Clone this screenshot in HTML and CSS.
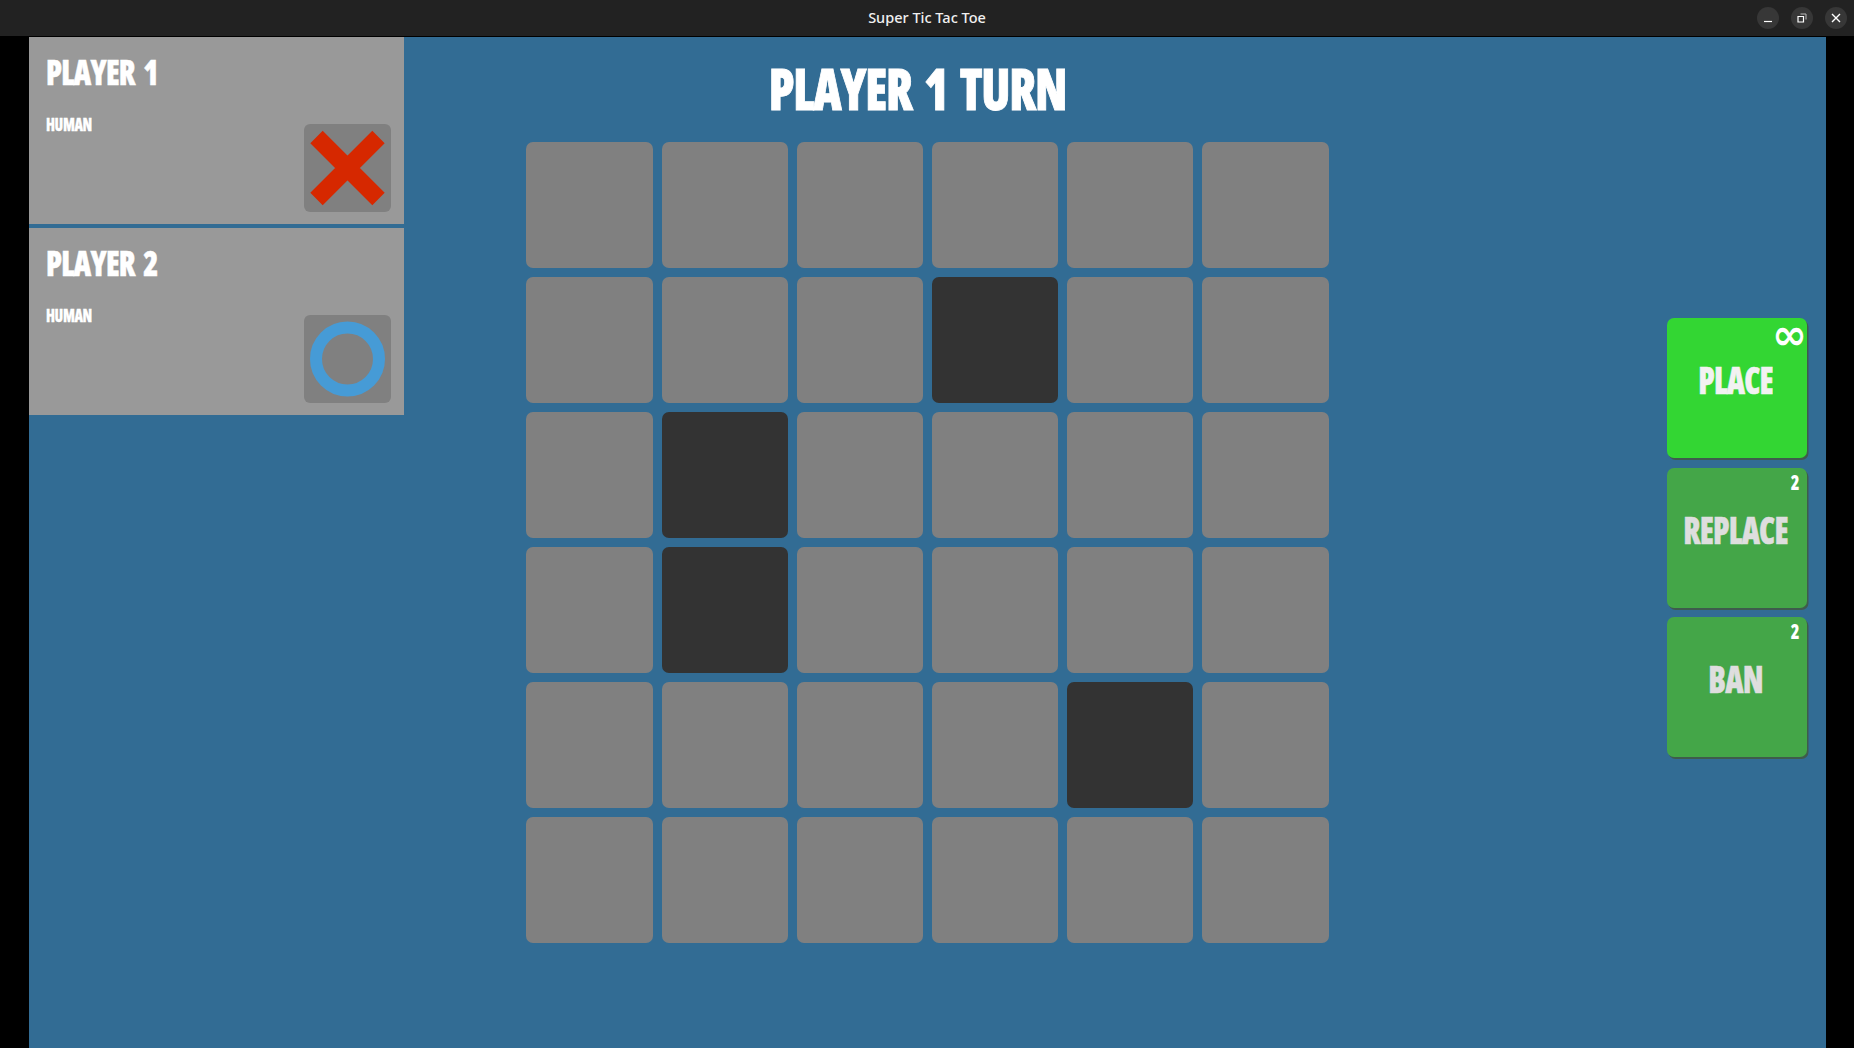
FILE: index.html
```html
<!DOCTYPE html>
<html lang="en">
<head>
<meta charset="utf-8">
<title>Super Tic Tac Toe</title>
<link rel="stylesheet" href="styles.css">
</head>
<body>
<header class="titlebar">
  <span class="window-title">Super Tic Tac Toe</span>
  <div class="window-controls">
    <button class="win-btn" aria-label="Minimize"><svg viewBox="0 0 10 10" width="10" height="10"><path d="M1 8.5h8" stroke="#fff" stroke-width="1.2" fill="none"/></svg></button>
    <button class="win-btn" aria-label="Restore"><svg viewBox="0 0 10 10" width="10" height="10"><path d="M1 3.5h5.5v5.500h-5.500z" stroke="#fff" stroke-width="1.200" fill="none"/><path d="M3.500 1h5.500v5.500" stroke="#bbb" stroke-width="1" fill="none"/></svg></button>
    <button class="win-btn" aria-label="Close"><svg viewBox="0 0 10 10" width="10" height="10"><path d="M1 1l8 8M9 1l-8 8" stroke="#fff" stroke-width="1.400" fill="none"/></svg></button>
  </div>
</header>
<main class="stage">
  <div class="game">
    <aside class="players">
      <section class="player">
        <div class="player-text">
          <h2 class="player-name">PLAYER 1</h2>
          <p class="player-kind">HUMAN</p>
        </div>
        <div class="mark"><svg viewBox="0 0 87 88" width="87" height="88"><path d="M12.500 13L74.500 75M74.500 13L12.500 75" stroke="#d62800" stroke-width="17.500" fill="none"/></svg></div>
      </section>
      <section class="player">
        <div class="player-text">
          <h2 class="player-name">PLAYER 2</h2>
          <p class="player-kind">HUMAN</p>
        </div>
        <div class="mark"><svg viewBox="0 0 87 88" width="87" height="88"><circle cx="43.500" cy="44" r="31.500" stroke="#469bd6" stroke-width="12" fill="none"/></svg></div>
      </section>
    </aside>
    <section class="center">
      <h1 class="turn">PLAYER 1 TURN</h1>
      <div class="board">
        <div class="cell"></div><div class="cell"></div><div class="cell"></div><div class="cell"></div><div class="cell"></div><div class="cell"></div>
        <div class="cell"></div><div class="cell"></div><div class="cell"></div><div class="cell dark"></div><div class="cell"></div><div class="cell"></div>
        <div class="cell"></div><div class="cell dark"></div><div class="cell"></div><div class="cell"></div><div class="cell"></div><div class="cell"></div>
        <div class="cell"></div><div class="cell dark"></div><div class="cell"></div><div class="cell"></div><div class="cell"></div><div class="cell"></div>
        <div class="cell"></div><div class="cell"></div><div class="cell"></div><div class="cell"></div><div class="cell dark"></div><div class="cell"></div>
        <div class="cell"></div><div class="cell"></div><div class="cell"></div><div class="cell"></div><div class="cell"></div><div class="cell"></div>
      </div>
    </section>
    <nav class="actions">
      <button class="action active"><span class="count infinity">∞</span><span class="action-label">PLACE</span></button>
      <button class="action"><span class="count">2</span><span class="action-label">REPLACE</span></button>
      <button class="action"><span class="count">2</span><span class="action-label">BAN</span></button>
    </nav>
  </div>
</main>
</body>
</html>
```
FILE: styles.css
```css
* { box-sizing: border-box; }
html, body { margin: 0; height: 100%; }
body {
  display: flex;
  flex-direction: column;
  background: #000;
  overflow: hidden;
  font-family: "Open Sans", sans-serif;
  font-stretch: 75%;
  font-weight: 800;
}
.titlebar {
  position: relative;
  flex: none;
  height: 37px;
  background: #222;
  border-bottom: 1px solid #000;
  display: flex;
  align-items: center;
  justify-content: center;
}
.window-title {
  position: relative;
  top: -1px;
  font-family: "Noto Sans", sans-serif;
  font-stretch: 100%;
  font-size: 14.500px;
  font-weight: 500;
  color: #f0f0f0;
}
.window-controls {
  position: absolute;
  right: 7px;
  top: 7px;
  display: flex;
  gap: 12px;
}
.win-btn {
  width: 22px;
  height: 22px;
  padding: 0;
  border: 0;
  border-radius: 50%;
  background: #373737;
  display: flex;
  align-items: center;
  justify-content: center;
}
.stage {
  flex: 1;
  min-height: 0;
  padding: 0 28px 0 29px;
}
.game {
  height: 100%;
  background: #326c94;
  display: flex;
}
.players {
  flex: none;
  width: 375px;
  display: flex;
  flex-direction: column;
  gap: 4px;
}
.player {
  height: 187px;
  background: #999;
  padding: 0 13px 12px 17px;
  display: flex;
  justify-content: space-between;
  align-items: flex-end;
  align-self: stretch;
}
.player-text {
  align-self: flex-start;
  color: #fff;
}
.player-name {
  margin: 15px 0 0;
  font-size: 35px;
  line-height: 40px;
  font-weight: 800;
  letter-spacing: -0.026em;
  word-spacing: 4.500px;
  transform: scaleX(0.88);
  transform-origin: left center;
  -webkit-text-stroke: 0.5px #fff;
}
.player-kind {
  margin: 22px 0 0;
  font-size: 18px;
  line-height: 20px;
  font-weight: 800;
  letter-spacing: -0.026em;
  transform: scaleX(0.82);
  transform-origin: left center;
  -webkit-text-stroke: 0.3px #fff;
}
.mark {
  width: 87px;
  height: 88px;
  background: #808080;
  border-radius: 6px;
}
.mark svg { display: block; }
.center {
  flex: none;
  width: 1027px;
}
.turn {
  margin: 20px 0 0;
  text-align: center;
  font-size: 57px;
  line-height: 62px;
  font-weight: 800;
  color: #fff;
  letter-spacing: -0.026em;
  word-spacing: 5.750px;
  transform: scaleX(0.87);
  -webkit-text-stroke: 0.9px #fff;
}
.board {
  margin: 22.500px 0 0 122.400px;
  display: grid;
  grid-template-columns: repeat(6, 126.200px);
  grid-auto-rows: 126px;
  gap: 9px;
}
.cell {
  background: #808080;
  border-radius: 7px;
}
.cell.dark { background: #333; }
.actions {
  margin: 281px 19px 0 auto;
  display: flex;
  flex-direction: column;
  gap: 9.500px;
}
.action {
  position: relative;
  width: 140px;
  height: 140px;
  padding: 0;
  border: 0;
  border-radius: 7px;
  background: #44a648;
  box-shadow: 1.500px 2px 0 #3e5c4c;
  color: #dedede;
  display: block;
  font-family: inherit;
  font-stretch: inherit;
}
.action.active {
  background: #33d633;
  color: #f2f2f2;
}
.action-label {
  position: absolute;
  left: 0;
  right: 3px;
  top: 39px;
  font-size: 37px;
  line-height: 46px;
  font-weight: 800;
  letter-spacing: -0.026em;
  transform: scaleX(0.86);
  -webkit-text-stroke: 0.5px currentColor;
}
.count {
  position: absolute;
  top: 2px;
  right: 7px;
  color: #fff;
  font-size: 21px;
  line-height: 24px;
  font-weight: 800;
  transform: scaleX(0.85);
}
.infinity {
  top: -5px;
  right: 0;
  font-family: "DejaVu Sans", sans-serif;
  font-stretch: 100%;
  font-weight: 700;
  font-size: 42px;
  line-height: 44px;
  transform: none;
}
```
